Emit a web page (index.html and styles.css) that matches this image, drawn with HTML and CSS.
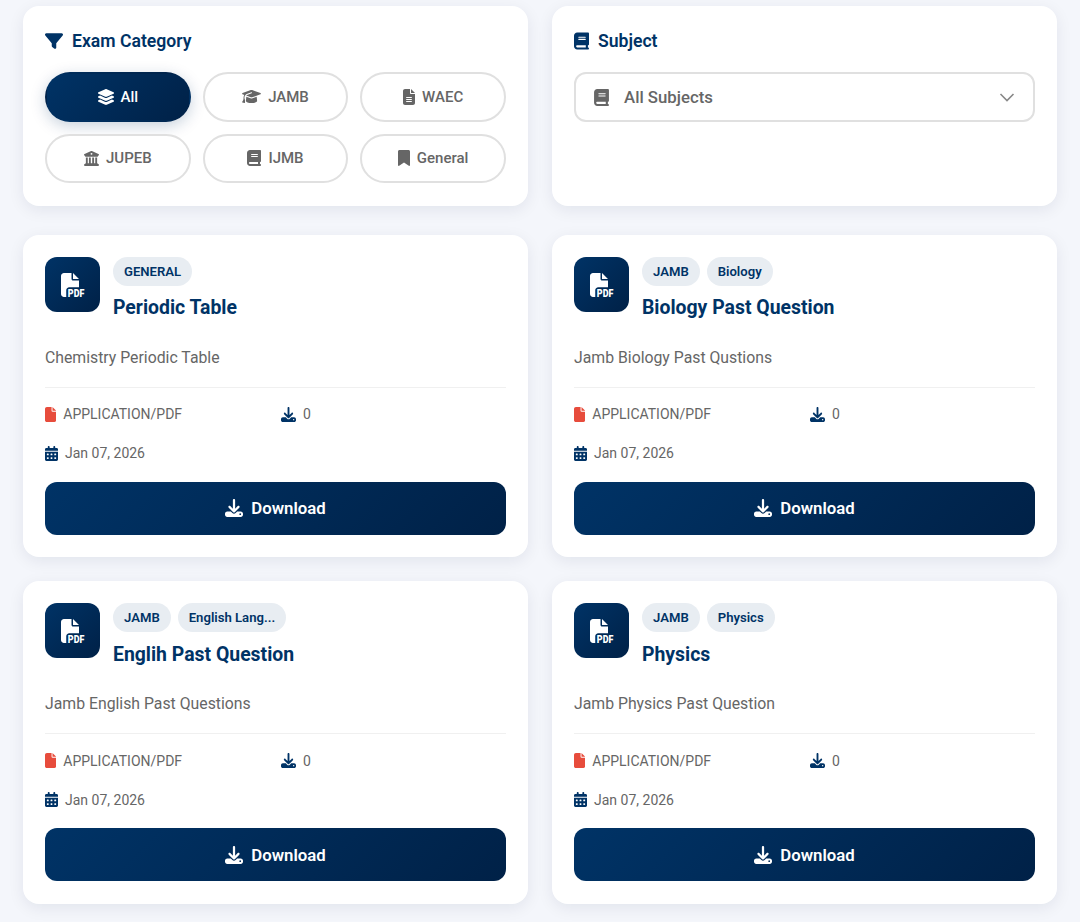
FILE: index.html
```html
<!DOCTYPE html>
<html lang="en">
<head>
  <meta charset="UTF-8" />
  <meta name="viewport" content="width=device-width, initial-scale=1.0"/>
  <title>Past Questions</title>
  <link rel="stylesheet" href="styles.css">
</head>
<body>

  <svg class="sprite" aria-hidden="true">
    <symbol id="i-filter" viewBox="0 0 512 512"><path d="M3.9 54.9C10.5 40.9 24.5 32 40 32H472c15.5 0 29.5 8.9 36.1 22.9s4.6 30.5-5.2 42.5L320 320.9V448c0 12.1-6.8 23.2-17.7 28.6s-23.8 4.3-33.5-3l-64-48c-8.1-6-12.8-15.5-12.8-25.6V320.9L9 97.3C-.7 85.4-2.8 68.8 3.9 54.9z"/></symbol>
    <symbol id="i-book" viewBox="0 0 448 512"><path d="M96 0C43 0 0 43 0 96V416c0 53 43 96 96 96H384h32c17.7 0 32-14.3 32-32s-14.3-32-32-32V384c17.7 0 32-14.3 32-32V32c0-17.7-14.3-32-32-32H384 96zm0 384H352v64H96c-17.7 0-32-14.3-32-32s14.3-32 32-32zm32-240c0-8.8 7.2-16 16-16H336c8.8 0 16 7.2 16 16s-7.2 16-16 16H144c-8.8 0-16-7.2-16-16zm16 48H336c8.8 0 16 7.2 16 16s-7.2 16-16 16H144c-8.8 0-16-7.2-16-16s7.2-16 16-16z"/></symbol>
    <symbol id="i-layers" viewBox="32 0 512 512"><path d="M264.5 5.2c14.9-6.9 32.1-6.9 47 0l218.6 101c8.5 3.9 13.9 12.4 13.9 21.8s-5.4 17.9-13.9 21.8l-218.6 101c-14.9 6.9-32.1 6.9-47 0L45.9 149.8C37.4 145.8 32 137.3 32 128s5.4-17.9 13.9-21.8L264.5 5.2zM476.9 209.6l53.2 24.6c8.5 3.9 13.9 12.4 13.9 21.8s-5.4 17.9-13.9 21.8l-218.6 101c-14.9 6.9-32.1 6.9-47 0L45.9 277.8C37.4 273.8 32 265.3 32 256s5.4-17.9 13.9-21.8l53.2-24.6 152 70.2c23.4 10.8 50.4 10.8 73.8 0l152-70.2zm-152 198.2l152-70.2 53.2 24.6c8.5 3.9 13.9 12.4 13.9 21.8s-5.4 17.9-13.9 21.8l-218.6 101c-14.9 6.9-32.1 6.9-47 0L45.9 405.8C37.4 401.8 32 393.3 32 384s5.4-17.9 13.9-21.8l53.2-24.6 152 70.2c23.4 10.8 50.4 10.8 73.8 0z"/></symbol>
    <symbol id="i-cap" viewBox="0 0 640 512"><path d="M320 32c-8.1 0-16.1 1.4-23.7 4.1L15.8 137.4C6.3 140.9 0 149.9 0 160s6.3 19.1 15.8 22.6l57.9 20.9C57.3 229.3 48 259.8 48 291.9v28.1c0 28.4-10.8 57.7-22.3 80.8c-6.5 13-13.9 25.8-22.5 37.6C0 442.7-.9 448.3 .9 453.4s6 8.9 11.2 10.2l64 16c4.2 1.1 8.7 .3 12.4-2s6.3-6.1 7.1-10.4c8.6-42.8 4.3-81.2-2.1-108.7C90.3 344.3 86 329.8 80 316.5V291.9c0-30.2 10.2-58.7 27.9-81.5c12.9-15.5 29.6-28 49.2-35.7l157-61.7c8.2-3.2 17.5 .8 20.7 9s-.8 17.5-9 20.7l-157 61.7c-12.4 4.9-23.3 12.4-32.2 21.6l159.6 57.6c7.6 2.7 15.6 4.1 23.7 4.1s16.1-1.4 23.7-4.1L624.2 182.6c9.5-3.4 15.8-12.5 15.8-22.6s-6.3-19.1-15.8-22.6L343.7 36.1C336.1 33.4 328.1 32 320 32zM128 408c0 35.3 86 72 192 72s192-36.7 192-72L496.7 262.6 354.5 314c-11.1 4-22.8 6-34.5 6s-23.5-2-34.5-6L143.3 262.6 128 408z"/></symbol>
    <symbol id="i-file-lines" viewBox="0 0 384 512"><path d="M64 0C28.7 0 0 28.7 0 64V448c0 35.3 28.7 64 64 64H320c35.3 0 64-28.7 64-64V160H256c-17.7 0-32-14.3-32-32V0H64zM256 0V128H384L256 0zM112 256H272c8.8 0 16 7.2 16 16s-7.2 16-16 16H112c-8.8 0-16-7.2-16-16s7.2-16 16-16zm0 64H272c8.8 0 16 7.2 16 16s-7.2 16-16 16H112c-8.8 0-16-7.2-16-16s7.2-16 16-16zm0 64H272c8.8 0 16 7.2 16 16s-7.2 16-16 16H112c-8.8 0-16-7.2-16-16s7.2-16 16-16z"/></symbol>
    <symbol id="i-bank" viewBox="0 0 512 512"><path d="M243.4 2.6l-224 96c-14 6-21.8 21-18.7 35.8S16.8 160 32 160v8c0 13.3 10.7 24 24 24H456c13.3 0 24-10.7 24-24v-8c15.2 0 28.3-10.7 31.3-25.6s-4.8-29.9-18.7-35.8l-224-96c-8-3.4-17.2-3.4-25.2 0zM128 224H64V420.3c-.6 .3-1.2 .7-1.8 1.1l-48 32c-11.7 7.8-17 22.4-12.9 35.9S17.9 512 32 512H480c14.1 0 26.5-9.2 30.6-22.7s-1.1-28.1-12.9-35.9l-48-32c-.6-.4-1.2-.7-1.8-1.1V224H384V416H344V224H280V416H232V224H168V416H128V224zM256 64a32 32 0 1 1 0 64 32 32 0 1 1 0-64z"/></symbol>
    <symbol id="i-bookmark" viewBox="0 0 384 512"><path d="M0 48V487.7C0 501.1 10.9 512 24.3 512c5 0 9.9-1.5 14-4.4L192 400 345.7 507.6c4.1 2.9 9 4.4 14 4.4c13.4 0 24.3-10.9 24.3-24.3V48c0-26.5-21.5-48-48-48H48C21.5 0 0 21.5 0 48z"/></symbol>
    <symbol id="i-file" viewBox="0 0 384 512"><path d="M0 64C0 28.7 28.7 0 64 0H224V128c0 17.7 14.3 32 32 32H384V448c0 35.3-28.7 64-64 64H64c-35.3 0-64-28.7-64-64V64zm384 64H256V0L384 128z"/></symbol>
    <symbol id="i-download" viewBox="0 0 512 512"><path d="M288 32c0-17.7-14.3-32-32-32s-32 14.3-32 32V274.7l-73.4-73.4c-12.5-12.5-32.8-12.5-45.3 0s-12.5 32.8 0 45.3l128 128c12.5 12.5 32.8 12.5 45.3 0l128-128c12.5-12.5 12.5-32.8 0-45.3s-32.8-12.5-45.3 0L288 274.7V32zM64 352c-35.3 0-64 28.7-64 64v32c0 35.3 28.7 64 64 64H448c35.3 0 64-28.7 64-64V416c0-35.3-28.7-64-64-64H346.5l-45.3 45.3c-25 25-65.5 25-90.5 0L165.5 352H64zm368 56a24 24 0 1 1 0 48 24 24 0 1 1 0-48z"/></symbol>
    <symbol id="i-calendar" viewBox="0 0 448 512"><path d="M128 0c17.7 0 32 14.3 32 32V64H288V32c0-17.7 14.3-32 32-32s32 14.3 32 32V64h48c26.5 0 48 21.5 48 48v48H0V112C0 85.5 21.5 64 48 64H96V32c0-17.7 14.3-32 32-32zM0 192H448V464c0 26.5-21.5 48-48 48H48c-26.5 0-48-21.5-48-48V192zm64 80v32c0 8.8 7.2 16 16 16h32c8.8 0 16-7.2 16-16V272c0-8.8-7.2-16-16-16H80c-8.8 0-16 7.2-16 16zm128 0v32c0 8.8 7.2 16 16 16h32c8.8 0 16-7.2 16-16V272c0-8.8-7.2-16-16-16H208c-8.8 0-16 7.2-16 16zm144-16c-8.8 0-16 7.2-16 16v32c0 8.8 7.2 16 16 16h32c8.8 0 16-7.2 16-16V272c0-8.8-7.2-16-16-16H336zM64 400v32c0 8.8 7.2 16 16 16h32c8.8 0 16-7.2 16-16V400c0-8.8-7.2-16-16-16H80c-8.8 0-16 7.2-16 16zm144-16c-8.8 0-16 7.2-16 16v32c0 8.8 7.2 16 16 16h32c8.8 0 16-7.2 16-16V400c0-8.8-7.2-16-16-16H208zm112 16v32c0 8.8 7.2 16 16 16h32c8.8 0 16-7.2 16-16V400c0-8.8-7.2-16-16-16H336c-8.8 0-16 7.2-16 16z"/></symbol>
    <symbol id="i-pdf" viewBox="0 0 512 512"><path d="M0 64C0 28.7 28.7 0 64 0H224V128c0 17.7 14.3 32 32 32H384V304H176c-35.3 0-64 28.7-64 64V512H64c-35.3 0-64-28.7-64-64V64zm384 64H256V0L384 128z"/><text x="146" y="506" textLength="350" lengthAdjust="spacingAndGlyphs" font-family="Roboto" font-weight="900" font-size="230">PDF</text></symbol>
  </svg>

  <main class="page">

    <section class="card filter-card">
      <h3 class="filter-title"><svg class="icon"><use href="#i-filter"/></svg>Exam Category</h3>
      <div class="pills">
        <button class="pill active"><svg class="icon icon-square"><use href="#i-layers"/></svg>All</button>
        <button class="pill"><svg class="icon icon-wide"><use href="#i-cap"/></svg>JAMB</button>
        <button class="pill"><svg class="icon icon-file"><use href="#i-file-lines"/></svg>WAEC</button>
        <button class="pill"><svg class="icon icon-bank"><use href="#i-bank"/></svg>JUPEB</button>
        <button class="pill"><svg class="icon icon-book"><use href="#i-book"/></svg>IJMB</button>
        <button class="pill"><svg class="icon icon-file"><use href="#i-bookmark"/></svg>General</button>
      </div>
    </section>

    <section class="card filter-card">
      <h3 class="filter-title"><svg class="icon icon-book"><use href="#i-book"/></svg>Subject</h3>
      <div class="select">
        <svg class="icon icon-book"><use href="#i-book"/></svg>
        <span class="select-label">All Subjects</span>
        <svg class="chevron" viewBox="0 0 16 16"><path d="M1.5 5l6.500 6.500 6.500-6.500"/></svg>
      </div>
    </section>

    <article class="card doc-card">
      <div class="doc-head">
        <div class="doc-thumb"><svg><use href="#i-pdf"/></svg></div>
        <div class="doc-info">
          <div class="badges"><span class="badge">GENERAL</span></div>
          <h4 class="doc-title">Periodic Table</h4>
        </div>
      </div>
      <p class="doc-desc">Chemistry Periodic Table</p>
      <div class="doc-meta">
        <span class="meta"><svg class="icon icon-red"><use href="#i-file"/></svg>APPLICATION/PDF</span>
        <span class="meta"><svg class="icon icon-navy"><use href="#i-download"/></svg>0</span>
        <span class="meta"><svg class="icon icon-navy icon-cal"><use href="#i-calendar"/></svg>Jan 07, 2026</span>
      </div>
      <button class="download"><svg class="icon"><use href="#i-download"/></svg>Download</button>
    </article>

    <article class="card doc-card">
      <div class="doc-head">
        <div class="doc-thumb"><svg><use href="#i-pdf"/></svg></div>
        <div class="doc-info">
          <div class="badges"><span class="badge">JAMB</span><span class="badge">Biology</span></div>
          <h4 class="doc-title">Biology Past Question</h4>
        </div>
      </div>
      <p class="doc-desc">Jamb Biology Past Qustions</p>
      <div class="doc-meta">
        <span class="meta"><svg class="icon icon-red"><use href="#i-file"/></svg>APPLICATION/PDF</span>
        <span class="meta"><svg class="icon icon-navy"><use href="#i-download"/></svg>0</span>
        <span class="meta"><svg class="icon icon-navy icon-cal"><use href="#i-calendar"/></svg>Jan 07, 2026</span>
      </div>
      <button class="download"><svg class="icon"><use href="#i-download"/></svg>Download</button>
    </article>

    <article class="card doc-card">
      <div class="doc-head">
        <div class="doc-thumb"><svg><use href="#i-pdf"/></svg></div>
        <div class="doc-info">
          <div class="badges"><span class="badge">JAMB</span><span class="badge">English Lang...</span></div>
          <h4 class="doc-title">Englih Past Question</h4>
        </div>
      </div>
      <p class="doc-desc">Jamb English Past Questions</p>
      <div class="doc-meta">
        <span class="meta"><svg class="icon icon-red"><use href="#i-file"/></svg>APPLICATION/PDF</span>
        <span class="meta"><svg class="icon icon-navy"><use href="#i-download"/></svg>0</span>
        <span class="meta"><svg class="icon icon-navy icon-cal"><use href="#i-calendar"/></svg>Jan 07, 2026</span>
      </div>
      <button class="download"><svg class="icon"><use href="#i-download"/></svg>Download</button>
    </article>

    <article class="card doc-card">
      <div class="doc-head">
        <div class="doc-thumb"><svg><use href="#i-pdf"/></svg></div>
        <div class="doc-info">
          <div class="badges"><span class="badge">JAMB</span><span class="badge">Physics</span></div>
          <h4 class="doc-title">Physics</h4>
        </div>
      </div>
      <p class="doc-desc">Jamb Physics Past Question</p>
      <div class="doc-meta">
        <span class="meta"><svg class="icon icon-red"><use href="#i-file"/></svg>APPLICATION/PDF</span>
        <span class="meta"><svg class="icon icon-navy"><use href="#i-download"/></svg>0</span>
        <span class="meta"><svg class="icon icon-navy icon-cal"><use href="#i-calendar"/></svg>Jan 07, 2026</span>
      </div>
      <button class="download"><svg class="icon"><use href="#i-download"/></svg>Download</button>
    </article>

  </main>

</body>
</html>
```

FILE: styles.css
```css
* {
  box-sizing: border-box;
}

body {
  margin: 0;
  background: #f4f6fb;
  font-family: Roboto, "Liberation Sans", sans-serif;
  color: #666;
}

.sprite {
  display: none;
}

.page {
  display: grid;
  grid-template-columns: 505px 505px;
  column-gap: 24px;
  row-gap: 24px;
  padding: 6px 23px 18px;
}

.card {
  background: #fff;
  border-radius: 16px;
  padding: 22px;
  box-shadow: 0 4px 16px rgba(0, 30, 70, 0.08);
}

.icon {
  width: 18px;
  height: 18px;
  fill: currentColor;
  flex: none;
}

/* filters */
.filter-card {
  height: 200px;
  margin-bottom: 5px;
}

.filter-title {
  display: flex;
  align-items: center;
  gap: 9px;
  margin: 0 0 18px;
  height: 26px;
  font-size: 17.6px;
  font-weight: 600;
  color: #003366;
}

.filter-title .icon-book {
  width: 15px;
  height: 18px;
}

.pills {
  display: grid;
  grid-template-columns: repeat(3, 1fr);
  gap: 12px;
}

.pill {
  display: flex;
  align-items: center;
  justify-content: center;
  gap: 7px;
  height: 49.5px;
  background: #fff;
  border: 2px solid #e0e0e0;
  border-radius: 25px;
  font-family: inherit;
  font-size: 15px;
  font-weight: 500;
  color: #666;
}

.pill .icon-square {
  width: 16px;
  height: 16px;
}

.pill .icon-bank {
  width: 15px;
  height: 15px;
}

.pill .icon-wide {
  width: 19px;
  height: 15px;
}

.pill .icon-file {
  width: 12px;
  height: 16px;
}

.pill .icon-book {
  width: 14px;
  height: 16px;
}

.pill.active {
  background: linear-gradient(135deg, #003366, #002147);
  border-color: transparent;
  color: #fff;
  box-shadow: 0 4px 15px rgba(0, 51, 102, 0.22);
}

.select {
  display: flex;
  align-items: center;
  height: 50px;
  padding: 0 18px;
  border: 2px solid #e0e0e0;
  border-radius: 12px;
  font-size: 16.8px;
  font-weight: 500;
  color: #666;
}

.select .icon-book {
  width: 15px;
  height: 17px;
}

.select-label {
  flex: 1;
  margin-left: 15px;
}

.chevron {
  width: 16px;
  height: 16px;
  fill: none;
  stroke: #888;
  stroke-width: 1.6;
}

/* document cards */
.doc-card {
  display: flex;
  flex-direction: column;
  padding-bottom: 22.5px;
}

.doc-head {
  display: flex;
  gap: 13px;
}

.doc-thumb {
  display: flex;
  align-items: center;
  justify-content: center;
  flex: none;
  width: 55px;
  height: 55px;
  border-radius: 12px;
  background: linear-gradient(135deg, #003366, #002147);
  fill: #fff;
}

.doc-thumb svg {
  width: 24px;
  height: 24px;
}

.doc-info {
  min-width: 0;
}

.badges {
  display: flex;
  gap: 7px;
}

.badge {
  display: flex;
  align-items: center;
  height: 29px;
  padding: 0 11px;
  background: #e8edf2;
  border-radius: 15px;
  font-size: 13.12px;
  font-weight: 600;
  color: #003366;
}

.doc-title {
  margin: 9.2px 0 0;
  font-size: 19.4px;
  font-weight: 700;
  line-height: 26.5px;
  color: #003366;
}

.doc-desc {
  margin: 23.9px 0 0;
  padding-bottom: 17px;
  border-bottom: 1px solid #f0f0f0;
  font-size: 15.8px;
  line-height: 24px;
  color: #666;
}

.doc-meta {
  display: grid;
  grid-template-columns: 1fr 1fr;
  column-gap: 11px;
  row-gap: 22px;
  margin-top: 18px;
}

.meta {
  display: flex;
  align-items: center;
  gap: 7px;
  height: 17px;
  font-size: 14px;
  color: #666;
}

.meta .icon {
  width: 15px;
  height: 15px;
}

.meta .icon-red {
  width: 11.25px;
  color: #e74c3c;
}

.meta .icon-cal {
  width: 13px;
}

.icon-navy {
  color: #003366;
}

.download {
  display: flex;
  align-items: center;
  justify-content: center;
  gap: 8px;
  height: 53.4px;
  margin-top: 20px;
  background: linear-gradient(135deg, #003366, #002147);
  border: none;
  border-radius: 12px;
  font-family: inherit;
  font-size: 16.8px;
  font-weight: 600;
  color: #fff;
}

.download .icon {
  width: 18px;
  height: 18px;
}
```
